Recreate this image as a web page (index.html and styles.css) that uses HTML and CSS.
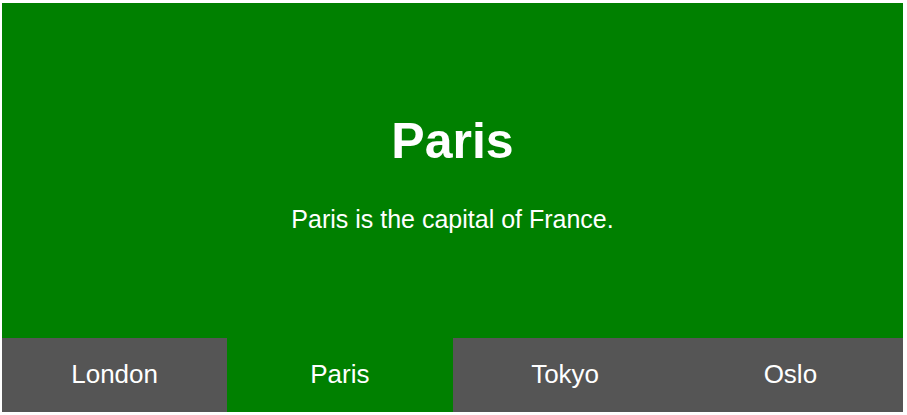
FILE: index.html
```html
<!DOCTYPE html>
<html>
<head>
<meta charset="utf-8">
<link rel="stylesheet" href="styles.css">
</head>
<body>
<div class="tabs">
  <div class="panel">
    <h1 class="title">Paris</h1>
    <p class="text">Paris is the capital of France.</p>
  </div>
  <div class="tabbar">
    <div class="tab">London</div>
    <div class="tab active">Paris</div>
    <div class="tab">Tokyo</div>
    <div class="tab">Oslo</div>
  </div>
</div>
</body>
</html>
```
FILE: styles.css
```css
html, body {
  margin: 0;
  padding: 0;
  background: #fff;
}
body {
  font-family: "Liberation Sans", Arial, sans-serif;
  color: #fff;
}
.tabs {
  margin: 3px 4px 3px 2px;
  width: 901px;
  display: flex;
  flex-direction: column;
}
.panel {
  height: 335px;
  background: #008000;
  box-sizing: border-box;
  padding-top: 113px;
  display: flex;
  flex-direction: column;
  align-items: center;
}
.title {
  margin: 0;
  font-size: 50px;
  line-height: 1;
  font-weight: bold;
}
.text {
  margin: 41px 0 0;
  font-size: 25px;
  line-height: 1;
}
.tabbar {
  display: grid;
  grid-template-columns: repeat(4, 1fr);
  height: 74px;
  background: #555;
}
.tab {
  display: flex;
  align-items: center;
  justify-content: center;
  font-size: 26px;
  padding-bottom: 2px;
}
.tab.active {
  background: #008000;
}
```
